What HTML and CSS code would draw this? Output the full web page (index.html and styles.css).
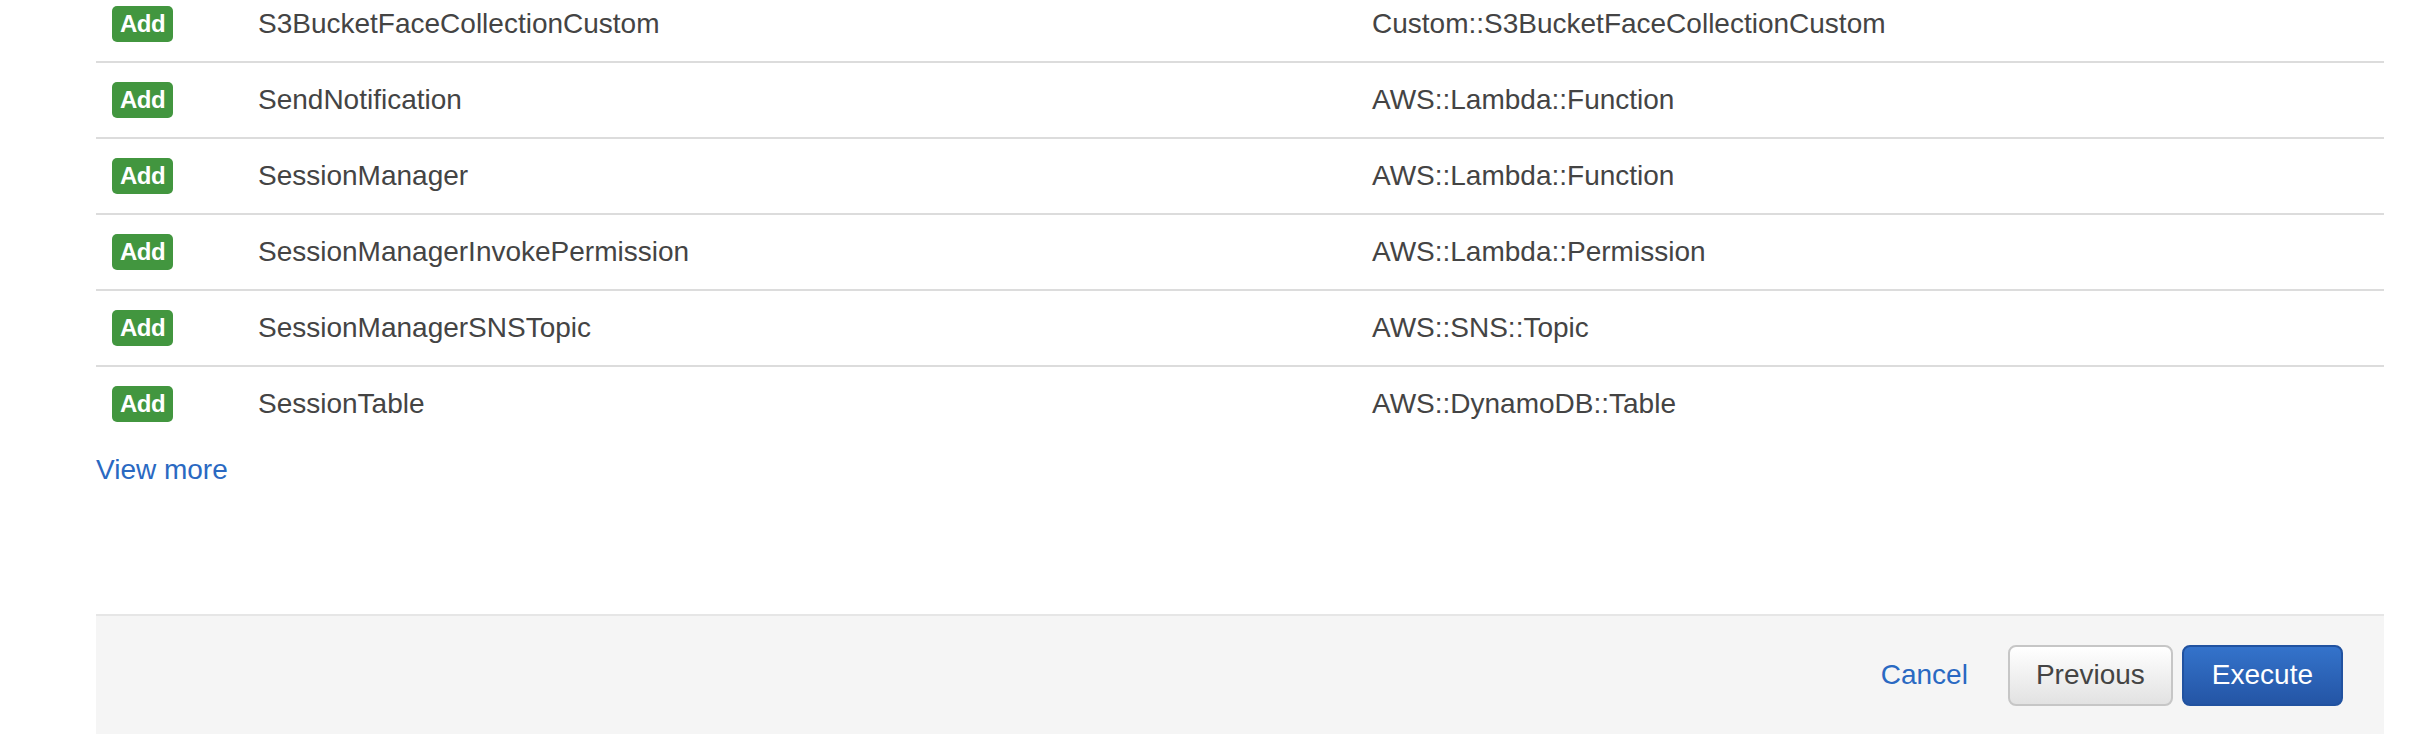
FILE: index.html
```html
<!DOCTYPE html>
<html lang="en">
<head>
<meta charset="utf-8">
<title>Change set</title>
<link rel="stylesheet" href="styles.css">
</head>
<body>
<div class="page">
  <div class="changes">
    <div class="row">
      <div class="cell cell-action"><span class="badge">Add</span></div>
      <div class="cell">S3BucketFaceCollectionCustom</div>
      <div class="cell">Custom::S3BucketFaceCollectionCustom</div>
    </div>
    <div class="row">
      <div class="cell cell-action"><span class="badge">Add</span></div>
      <div class="cell">SendNotification</div>
      <div class="cell">AWS::Lambda::Function</div>
    </div>
    <div class="row">
      <div class="cell cell-action"><span class="badge">Add</span></div>
      <div class="cell">SessionManager</div>
      <div class="cell">AWS::Lambda::Function</div>
    </div>
    <div class="row">
      <div class="cell cell-action"><span class="badge">Add</span></div>
      <div class="cell">SessionManagerInvokePermission</div>
      <div class="cell">AWS::Lambda::Permission</div>
    </div>
    <div class="row">
      <div class="cell cell-action"><span class="badge">Add</span></div>
      <div class="cell">SessionManagerSNSTopic</div>
      <div class="cell">AWS::SNS::Topic</div>
    </div>
    <div class="row">
      <div class="cell cell-action"><span class="badge">Add</span></div>
      <div class="cell">SessionTable</div>
      <div class="cell">AWS::DynamoDB::Table</div>
    </div>
  </div>
  <a class="view-more" href="#">View more</a>
  <div class="footer">
    <a class="cancel" href="#">Cancel</a>
    <button class="btn btn-secondary" type="button">Previous</button>
    <button class="btn btn-primary" type="button">Execute</button>
  </div>
</div>
</body>
</html>
```
FILE: styles.css
```css
html, body {
  margin: 0;
  padding: 0;
  background: #ffffff;
}

body {
  font-family: "Liberation Sans", Arial, Helvetica, sans-serif;
  font-size: 28px;
  color: #444444;
  overflow: hidden;
}

.page {
  margin-top: -13px;
  padding: 0 36px 0 96px;
}

.changes {
  display: flex;
  flex-direction: column;
}

.row {
  display: grid;
  grid-template-columns: 146px 1114px 1fr;
  align-items: center;
  height: 74px;
  border-bottom: 2px solid #dcdcdc;
}

.row:last-child {
  border-bottom: none;
}

.cell {
  padding-left: 16px;
  white-space: nowrap;
  line-height: 32px;
}

.cell-action {
  display: flex;
  align-items: center;
}

.badge {
  display: inline-flex;
  align-items: center;
  justify-content: center;
  width: 61px;
  height: 36px;
  box-sizing: border-box;
  border-radius: 5px;
  background: #42963f;
  color: #ffffff;
  font-weight: bold;
  font-size: 24px;
  letter-spacing: -0.5px;
  line-height: 1;
}

.view-more {
  display: block;
  width: max-content;
  margin-top: 9px;
  line-height: 40px;
  color: #2a69c2;
  text-decoration: none;
}

.footer {
  display: flex;
  justify-content: flex-end;
  align-items: center;
  gap: 9px;
  margin-top: 124px;
  height: 118px;
  padding-right: 41px;
  background: #f5f5f5;
  border-top: 2px solid #e6e6e6;
}

.cancel {
  color: #2a69c2;
  text-decoration: none;
  margin-right: 31px;
}

.btn {
  height: 61px;
  font-family: inherit;
  font-size: 28px;
  border-radius: 8px;
  cursor: pointer;
}

.btn-secondary {
  padding: 0 26px;
  color: #444444;
  border: 2px solid #c6c6c6;
  background: linear-gradient(#ffffff, #e2e2e2);
}

.btn-primary {
  padding: 0 28px;
  color: #ffffff;
  border: 2px solid #2152a0;
  background: linear-gradient(#3473cb, #2455a5);
}
```
